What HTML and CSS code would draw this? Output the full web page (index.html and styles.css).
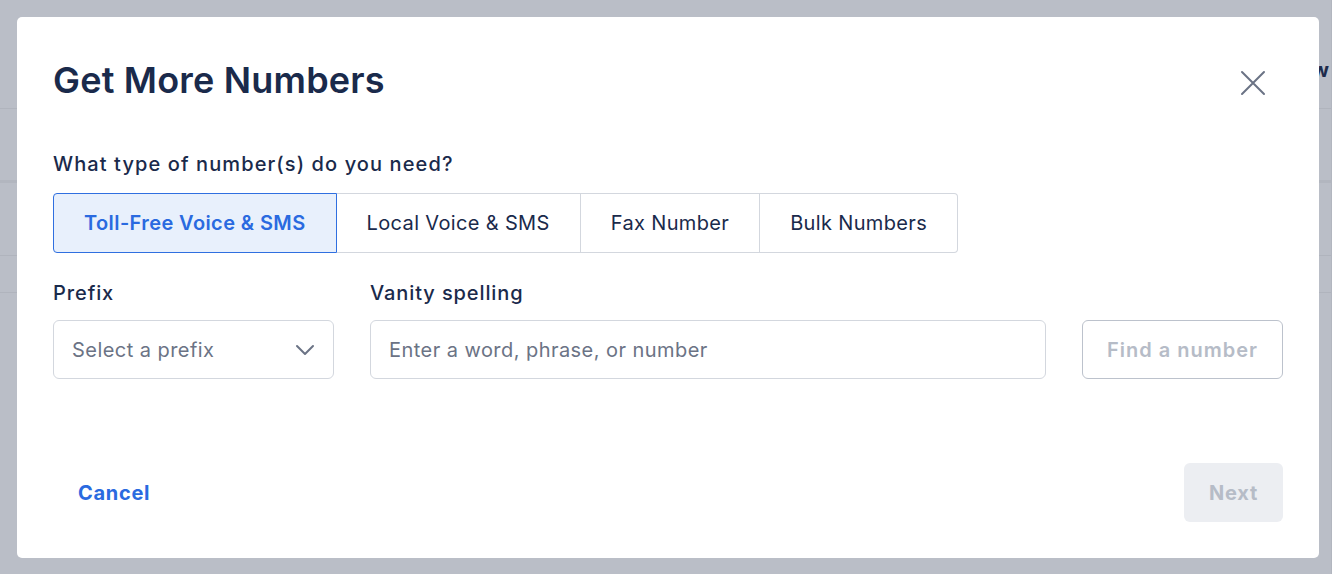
FILE: index.html
```html
<!DOCTYPE html>
<html lang="en">
<head>
<meta charset="utf-8">
<title>Get More Numbers</title>
<link rel="stylesheet" href="styles.css">
</head>
<body>
<div class="page">
  <div class="page-head"><span class="page-action">New</span></div>
  <div class="page-row row-a"></div>
  <div class="page-row row-b"></div>
  <div class="page-row row-c"></div>
  <div class="page-row row-d"></div>
</div>

<div class="modal" role="dialog" aria-labelledby="modal-title">
  <div class="modal-header">
    <h1 id="modal-title" class="modal-title">Get More Numbers</h1>
    <button class="close-btn" aria-label="Close">
      <svg width="26" height="26" viewBox="0 0 26 26" fill="none" stroke="#6b7385" stroke-width="2" stroke-linecap="round">
        <path d="M2 2 L24 24 M24 2 L2 24"/>
      </svg>
    </button>
  </div>

  <p class="question">What type of number(s) do you need?</p>
  <div class="tabs">
    <button class="tab active">Toll-Free Voice &amp; SMS</button>
    <button class="tab">Local Voice &amp; SMS</button>
    <button class="tab">Fax Number</button>
    <button class="tab last">Bulk Numbers</button>
  </div>

  <div class="fields">
    <div class="field field-prefix">
      <label class="field-label">Prefix</label>
      <div class="select">
        <span class="placeholder">Select a prefix</span>
        <svg width="20" height="12" viewBox="0 0 20 12" fill="none" stroke="#6b7385" stroke-width="2" stroke-linecap="round" stroke-linejoin="round">
          <path d="M2 2 L10 10 L18 2"/>
        </svg>
      </div>
    </div>
    <div class="field field-vanity">
      <label class="field-label">Vanity spelling</label>
      <div class="input"><span class="placeholder">Enter a word, phrase, or number</span></div>
    </div>
    <div class="field field-find">
      <button class="find-btn" disabled>Find a number</button>
    </div>
  </div>

  <div class="modal-footer">
    <button class="cancel-btn">Cancel</button>
    <button class="next-btn" disabled>Next</button>
  </div>
</div>
</body>
</html>
```

FILE: styles.css
```css
* { box-sizing: border-box; }

html, body {
  margin: 0;
  padding: 0;
  width: 1332px;
  height: 574px;
  overflow: hidden;
  background: #babec7;
  font-family: Inter, "Noto Sans", "Liberation Sans", sans-serif;
}

/* dimmed page behind the modal */
.page {
  display: flex;
  flex-direction: column;
  width: 1332px;
  height: 574px;
  border-right: 1px solid #b2b6bf;
}
.page-head {
  height: 109px;
  border-bottom: 1px solid #b0b4bd;
  display: flex;
  justify-content: flex-end;
  align-items: flex-start;
  padding: 58px 2px 0 0;
}
.page-action {
  font-size: 20px;
  font-weight: 700;
  color: #1e2b4b;
}
.page-row { border-bottom: 1px solid #b0b4bd; }
.row-a { height: 74px; border-bottom: 3px solid #b2b6bf; }
.row-b { height: 73px; }
.row-c { height: 37px; }
.row-d { flex: 1; border-bottom: none; }

/* modal */
.modal {
  position: absolute;
  left: 17px;
  top: 17px;
  width: 1302px;
  height: 541px;
  background: #ffffff;
  border-radius: 5px;
  padding: 43px 36px 36px 36px;
  display: flex;
  flex-direction: column;
}

.modal-header {
  display: flex;
  justify-content: space-between;
  align-items: center;
  height: 40px;
}
.modal-title {
  margin: 0;
  font-size: 36px;
  line-height: 40px;
  font-weight: 600;
  color: #1a2a4b;
  letter-spacing: 0.2px;
}
.close-btn {
  border: none;
  background: none;
  padding: 0;
  margin: 6px 17px 0 0;
  width: 26px;
  height: 26px;
  display: flex;
}

.question {
  margin: 51px 0 0 0;
  font-size: 20px;
  line-height: 26px;
  font-weight: 500;
  color: #1a2a4b;
  letter-spacing: 1.1px;
}

.tabs {
  margin-top: 16px;
  display: flex;
  height: 60px;
}
.tab {
  font-family: inherit;
  font-size: 20px;
  font-weight: 400;
  letter-spacing: 0.35px;
  color: #1a2a4b;
  background: #ffffff;
  border: 1px solid #d3d7de;
  border-left: none;
  padding: 0 30px;
  height: 60px;
}
.tab.active {
  background: #e8f0fc;
  border: 1px solid #2f6fe0;
  color: #2a6ae0;
  font-weight: 600;
  letter-spacing: 0.4px;
  border-radius: 4px 0 0 4px;
  padding: 0 30px;
}
.tab.last {
  border-radius: 0 4px 4px 0;
}

.fields {
  margin-top: 27px;
  display: flex;
  align-items: flex-end;
  gap: 36px;
}
.field {
  display: flex;
  flex-direction: column;
}
.field-label {
  font-size: 20px;
  line-height: 26px;
  font-weight: 500;
  letter-spacing: 0.9px;
  color: #1a2a4b;
  margin-bottom: 14px;
}
.field-prefix { width: 281px; }
.field-vanity { width: 676px; }
.field-find { width: 201px; }

.select, .input {
  height: 59px;
  border: 1px solid #d3d7de;
  border-radius: 6px;
  display: flex;
  align-items: center;
  padding: 0 18px;
}
.select {
  justify-content: space-between;
  padding-right: 18px;
}
.placeholder {
  font-size: 20px;
  letter-spacing: 0.45px;
  color: #6b7385;
}

.find-btn {
  font-family: inherit;
  height: 59px;
  border: 1px solid #bcc2cc;
  border-radius: 6px;
  background: #ffffff;
  color: #b6bcc7;
  font-size: 20px;
  font-weight: 600;
  letter-spacing: 1px;
  padding: 0;
}

.modal-footer {
  margin-top: auto;
  display: flex;
  justify-content: space-between;
  align-items: center;
}
.cancel-btn {
  font-family: inherit;
  border: none;
  background: none;
  color: #2a6ae0;
  font-size: 20px;
  font-weight: 700;
  letter-spacing: 0.7px;
  padding: 0 0 0 25px;
}
.next-btn {
  font-family: inherit;
  width: 99px;
  height: 59px;
  border: none;
  border-radius: 6px;
  background: #eceef2;
  color: #b6bcc7;
  font-size: 20px;
  font-weight: 700;
  letter-spacing: 0.75px;
}
```
